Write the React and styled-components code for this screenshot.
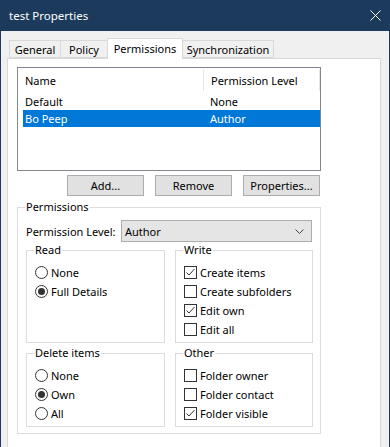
import React from "react";
import styled, { createGlobalStyle } from "styled-components";

const GlobalStyle = createGlobalStyle`
  html, body {
    margin: 0;
    padding: 0;
    background: #f0f0f0;
  }
  body {
    font-family: "Noto Sans", "Liberation Sans", sans-serif;
    font-size: 11px;
    color: #000;
  }
`;

const Window = styled.div`
  width: 390px;
  height: 447px;
  box-sizing: border-box;
  border-left: 1px solid #1b3a5c;
  border-right: 1px solid #1b3a5c;
  display: flex;
  flex-direction: column;
  overflow: hidden;
  background: #f0f0f0;
`;

const TitleBar = styled.div`
  height: 31px;
  flex: none;
  background: #1b3a5c;
  color: #fff;
  display: flex;
  align-items: center;
  justify-content: space-between;
  padding: 0 8px 0 8px;
  font-size: 11.5px;
`;

const CloseButton = styled.div`
  width: 12px;
  height: 12px;
  display: flex;
  align-items: center;
  justify-content: center;
`;

const Body = styled.div`
  flex: 1;
  display: flex;
  flex-direction: column;
  padding: 7px 8px 0 6px;
  min-height: 0;
`;

const TabStrip = styled.div`
  display: flex;
  align-items: flex-end;
  height: 20px;
  padding-left: 2px;
  flex: none;
`;

const Tab = styled.div`
  box-sizing: border-box;
  width: ${(p) => p.$w}px;
  height: ${(p) => (p.$active ? 21 : 18)}px;
  margin-left: ${(p) => (p.$first ? 0 : -1)}px;
  margin-bottom: ${(p) => (p.$active ? -1 : 0)}px;
  border: 1px solid #d9d9d9;
  border-bottom: ${(p) => (p.$active ? "none" : "1px solid #d9d9d9")};
  background: ${(p) => (p.$active ? "#fff" : "#f0f0f0")};
  position: relative;
  z-index: ${(p) => (p.$active ? 2 : 1)};
  display: flex;
  align-items: center;
  justify-content: center;
  padding-bottom: ${(p) => (p.$active ? 2 : 0)}px;
  white-space: nowrap;
`;

const Panel = styled.div`
  flex: 1;
  background: #fff;
  border: 1px solid #d9d9d9;
  border-bottom: none;
  padding: 8px 0 0 9px;
  min-height: 0;
`;

const ListBox = styled.div`
  width: 304px;
  height: 104px;
  box-sizing: border-box;
  border: 1px solid #828790;
  background: #fff;
`;

const ListHeader = styled.div`
  display: grid;
  grid-template-columns: 185px 1fr;
  height: 25px;
`;

const HeaderCell = styled.div`
  display: flex;
  align-items: center;
  padding-left: 7px;
  margin: 2px 0;
  border-left: ${(p) => (p.$sep ? "1px solid #e5e5e5" : "none")};
  border-right: ${(p) => (p.$sep ? "1px solid #e5e5e5" : "none")};
`;

const ListRow = styled.div`
  display: grid;
  grid-template-columns: 185px 1fr;
  height: 17px;
  margin-left: 5px;
  align-items: center;
  background: ${(p) => (p.$selected ? "#0078d7" : "transparent")};
  color: ${(p) => (p.$selected ? "#fff" : "#000")};
`;

const Cell = styled.div`
  padding-left: 2px;
  white-space: nowrap;
`;

const ButtonRow = styled.div`
  width: 303px;
  display: flex;
  justify-content: flex-end;
  gap: 11px;
  margin-top: 4px;
`;

const Button = styled.div`
  box-sizing: border-box;
  width: 77px;
  height: 21px;
  background: #e1e1e1;
  border: 1px solid #adadad;
  display: flex;
  align-items: center;
  justify-content: center;
`;

const Group = styled.fieldset`
  margin: ${(p) => p.$mt || 0}px 0 0 0;
  min-width: 0;
  box-sizing: border-box;
  border: 1px solid #dcdcdc;
  padding: ${(p) => p.$pad};
  width: ${(p) => (p.$w ? `${p.$w}px` : "auto")};
`;

const Legend = styled.legend`
  padding: 0 1px;
  margin-left: -1px;
  line-height: 14px;
  height: 14px;
`;

const LevelRow = styled.div`
  display: flex;
  align-items: center;
  justify-content: space-between;
`;

const Combo = styled.div`
  box-sizing: border-box;
  width: 191px;
  height: 22px;
  background: #e5e5e5;
  border: 1px solid #adadad;
  display: flex;
  align-items: center;
  justify-content: space-between;
  padding: 0 7px 0 3px;
`;

const GroupGrid = styled.div`
  display: grid;
  grid-template-columns: 139px 138px;
  column-gap: 10px;
  margin-top: ${(p) => p.$mt}px;
`;

const Option = styled.div`
  display: flex;
  align-items: center;
  height: 19px;
  white-space: nowrap;
`;

const Radio = styled.span`
  box-sizing: border-box;
  width: 13px;
  height: 13px;
  border-radius: 50%;
  border: 1px solid #333;
  background: #fff;
  margin-right: 3px;
  display: flex;
  align-items: center;
  justify-content: center;
  flex: none;

  &::after {
    content: "";
    width: 7px;
    height: 7px;
    border-radius: 50%;
    background: #333;
    display: ${(p) => (p.$on ? "block" : "none")};
  }
`;

const Box = styled.span`
  box-sizing: border-box;
  width: 13px;
  height: 13px;
  border: 1px solid #333;
  background: #fff;
  margin-right: 3px;
  display: flex;
  align-items: center;
  justify-content: center;
  flex: none;
`;

const RadioOption = ({ on, children }) => (
  <Option>
    <Radio $on={on} />
    {children}
  </Option>
);

const CheckOption = ({ on, children }) => (
  <Option>
    <Box>
      {on && (
        <svg width="11" height="11" viewBox="0 0 11 11">
          <polyline
            points="1.5,5.5 4,8 9.5,2"
            fill="none"
            stroke="#333"
            strokeWidth="1"
          />
        </svg>
      )}
    </Box>
    {children}
  </Option>
);

const tabs = [
  { label: "General", w: 52 },
  { label: "Policy", w: 48 },
  { label: "Permissions", w: 76, active: true },
  { label: "Synchronization", w: 92 },
];

const rows = [
  { name: "Default", level: "None" },
  { name: "Bo Peep", level: "Author", selected: true },
];

const App = () => {
  return (
    <>
      <GlobalStyle />
      <Window>
        <TitleBar>
          <span>test Properties</span>
          <CloseButton>
            <svg width="11" height="11" viewBox="0 0 11 11">
              <path d="M0.5 0.5 L10.5 10.5 M10.5 0.5 L0.5 10.5" stroke="#fff" strokeWidth="1" />
            </svg>
          </CloseButton>
        </TitleBar>
        <Body>
          <TabStrip>
            {tabs.map((t, i) => (
              <Tab key={t.label} $w={t.w} $active={t.active} $first={i === 0}>
                {t.label}
              </Tab>
            ))}
          </TabStrip>
          <Panel>
            <ListBox>
              <ListHeader>
                <HeaderCell>Name</HeaderCell>
                <HeaderCell $sep>Permission Level</HeaderCell>
              </ListHeader>
              {rows.map((r) => (
                <ListRow key={r.name} $selected={r.selected}>
                  <Cell>{r.name}</Cell>
                  <Cell>{r.level}</Cell>
                </ListRow>
              ))}
            </ListBox>
            <ButtonRow>
              <Button>Add...</Button>
              <Button>Remove</Button>
              <Button>Properties...</Button>
            </ButtonRow>
            <Group $w={304} $mt={4} $pad="6px 8px 6px 8px">
              <Legend>Permissions</Legend>
              <LevelRow>
                <span>Permission Level:</span>
                <Combo>
                  <span>Author</span>
                  <svg width="9" height="5" viewBox="0 0 9 5">
                    <polyline points="0.5,0.5 4.5,4.5 8.5,0.5" fill="none" stroke="#444" strokeWidth="1" />
                  </svg>
                </Combo>
              </LevelRow>
              <GroupGrid $mt={1}>
                <Group $pad="6px 8px 3px 8px">
                  <Legend>Read</Legend>
                  <RadioOption>None</RadioOption>
                  <RadioOption on>Full Details</RadioOption>
                </Group>
                <Group $pad="6px 8px 3px 8px">
                  <Legend>Write</Legend>
                  <CheckOption on>Create items</CheckOption>
                  <CheckOption>Create subfolders</CheckOption>
                  <CheckOption on>Edit own</CheckOption>
                  <CheckOption>Edit all</CheckOption>
                </Group>
              </GroupGrid>
              <GroupGrid $mt={3}>
                <Group $pad="6px 8px 3px 8px">
                  <Legend>Delete items</Legend>
                  <RadioOption>None</RadioOption>
                  <RadioOption on>Own</RadioOption>
                  <RadioOption>All</RadioOption>
                </Group>
                <Group $pad="6px 8px 3px 8px">
                  <Legend>Other</Legend>
                  <CheckOption>Folder owner</CheckOption>
                  <CheckOption>Folder contact</CheckOption>
                  <CheckOption on>Folder visible</CheckOption>
                </Group>
              </GroupGrid>
            </Group>
          </Panel>
        </Body>
      </Window>
    </>
  );
};

export default App;
